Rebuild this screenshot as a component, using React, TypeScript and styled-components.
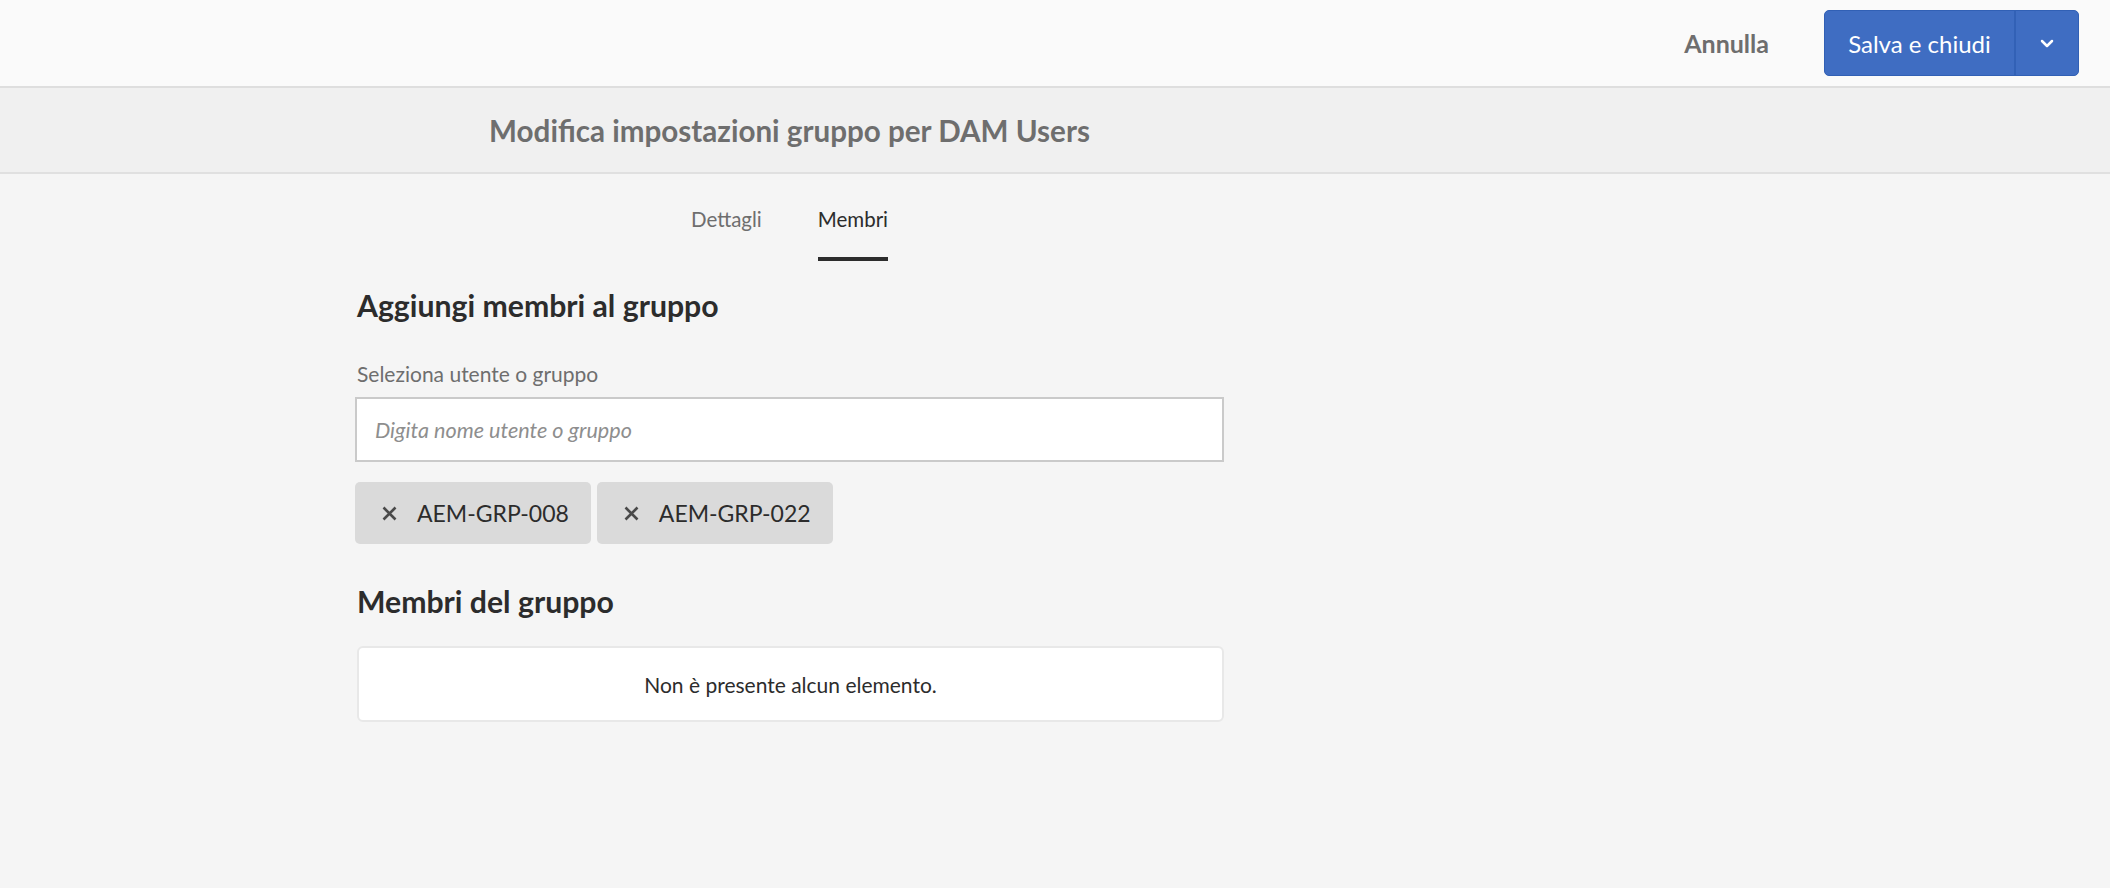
import React from 'react';
import styled, { createGlobalStyle } from 'styled-components';

const GlobalStyle = createGlobalStyle`
  html, body {
    margin: 0;
    padding: 0;
    background: #f5f5f5;
    font-family: Lato, 'Open Sans', sans-serif;
  }
  * { box-sizing: border-box; }
`;

const Page = styled.div`
  min-height: 100vh;
  display: flex;
  flex-direction: column;
  background: #f5f5f5;
`;

const TopBar = styled.header`
  height: 88px;
  background: #fafafa;
  border-bottom: 2px solid #dedede;
  display: flex;
  align-items: center;
  justify-content: flex-end;
  gap: 55px;
  padding: 0 31px 0 0;
`;

const QuietButton = styled.button`
  border: none;
  background: none;
  padding: 0;
  font-family: inherit;
  font-size: 25px;
  font-weight: 700;
  color: #6e6e6e;
  cursor: pointer;
`;

const SplitButton = styled.div`
  display: flex;
  height: 66px;
  border-radius: 5px;
  border: 1px solid #3160b5;
  background: #3f6dc2;
  overflow: hidden;
`;

const PrimaryPart = styled.button`
  border: none;
  background: transparent;
  color: #fff;
  font-family: inherit;
  font-size: 24px;
  padding: 0;
  width: 189px;
  cursor: pointer;
`;

const ChevronPart = styled.button`
  border: none;
  border-left: 2px solid #3261b6;
  background: transparent;
  width: 64px;
  display: flex;
  align-items: center;
  justify-content: center;
  cursor: pointer;
`;

const TitleBar = styled.div`
  height: 86px;
  background: #f0f0f0;
  border-bottom: 2px solid #e0e0e0;
  display: flex;
  align-items: center;
  padding-left: 355px;
`;

const Title = styled.h1`
  width: 869px;
  margin: 0;
  text-align: center;
  font-size: 29.6px;
  font-weight: 700;
  color: #6e6e6e;
`;

const Content = styled.main`
  padding-left: 355px;
  padding-bottom: 60px;
`;

const Column = styled.div`
  width: 869px;
  display: flex;
  flex-direction: column;
`;

const Tabs = styled.nav`
  display: flex;
  justify-content: center;
  gap: 56px;
`;

const Tab = styled.div<{ $active?: boolean }>`
  padding: 32px 0 25px;
  line-height: 26px;
  font-size: 20.5px;
  color: ${p => (p.$active ? '#2c2c2c' : '#6e6e6e')};
  border-bottom: 4px solid ${p => (p.$active ? '#2c2c2c' : 'transparent')};
`;

const SectionHeading = styled.h2<{ $top: number }>`
  margin: ${p => p.$top}px 0 0 2px;
  line-height: 36px;
  font-size: 30.2px;
  font-weight: 700;
  color: #2c2c2c;
`;

const FieldLabel = styled.label`
  margin: 38px 0 0 2px;
  line-height: 26px;
  font-size: 21px;
  color: #6e6e6e;
`;

const TextInput = styled.input`
  margin-top: 10px;
  height: 65px;
  width: 100%;
  border: 2px solid #cacaca;
  background: #fff;
  padding: 0 18px;
  font-family: inherit;
  font-size: 21.6px;
  color: #2c2c2c;
  outline: none;

  &::placeholder {
    font-style: italic;
    color: #8e8e8e;
  }
`;

const ChipRow = styled.div`
  margin-top: 20px;
  display: flex;
  gap: 6px;
`;

const Chip = styled.div`
  height: 62px;
  display: flex;
  align-items: center;
  gap: 19px;
  padding: 0 22px 0 26px;
  background: #dadada;
  border-radius: 5px;
  font-size: 23px;
  color: #2c2c2c;
`;

const RemoveIcon = styled.svg`
  width: 17px;
  height: 17px;
  flex: none;
`;

const EmptyList = styled.div`
  margin: 27px 0 0 2px;
  height: 76px;
  background: #fff;
  border: 2px solid #e8e8e8;
  border-radius: 6px;
  display: flex;
  align-items: center;
  justify-content: center;
  font-size: 21px;
  color: #2c2c2c;
`;

const Cross = () => (
  <RemoveIcon viewBox="0 0 17 17">
    <path d="M2.5 2.5L14.5 14.5M14.5 2.5L2.5 14.5" stroke="#4a4a4a" strokeWidth="2.6" strokeLinecap="butt" />
  </RemoveIcon>
);

const members = ['AEM-GRP-008', 'AEM-GRP-022'];

export default function App() {
  return (
    <Page>
      <GlobalStyle />
      <TopBar>
        <QuietButton>Annulla</QuietButton>
        <SplitButton>
          <PrimaryPart>Salva e chiudi</PrimaryPart>
          <ChevronPart aria-label="Altre azioni">
            <svg width="14" height="9" viewBox="0 0 14 9">
              <path d="M2 2L7 7L12 2" stroke="#fff" strokeWidth="2.5" fill="none" strokeLinecap="round" strokeLinejoin="round" />
            </svg>
          </ChevronPart>
        </SplitButton>
      </TopBar>
      <TitleBar>
        <Title>Modifica impostazioni gruppo per DAM Users</Title>
      </TitleBar>
      <Content>
        <Column>
          <Tabs>
            <Tab>Dettagli</Tab>
            <Tab $active>Membri</Tab>
          </Tabs>
          <SectionHeading $top={26}>Aggiungi membri al gruppo</SectionHeading>
          <FieldLabel>Seleziona utente o gruppo</FieldLabel>
          <TextInput placeholder="Digita nome utente o gruppo" />
          <ChipRow>
            {members.map(m => (
              <Chip key={m}>
                <Cross />
                {m}
              </Chip>
            ))}
          </ChipRow>
          <SectionHeading $top={39}>Membri del gruppo</SectionHeading>
          <EmptyList>Non è presente alcun elemento.</EmptyList>
        </Column>
      </Content>
    </Page>
  );
}
